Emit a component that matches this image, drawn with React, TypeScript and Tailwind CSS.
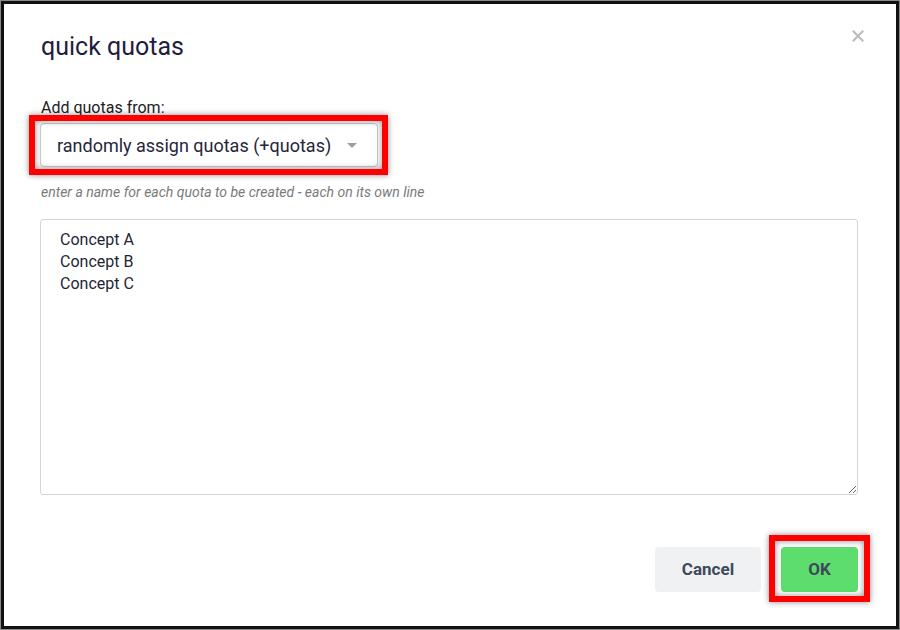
import React from 'react';

const font = { fontFamily: 'Roboto, "Liberation Sans", sans-serif' };

// red annotation frame drawn over a control
function Highlight({ className }: { className: string }) {
  return (
    <span
      className={`pointer-events-none absolute border-[6px] border-[#ff0000] shadow-[0_0_6px_rgba(0,0,0,0.45),inset_0_0_6px_rgba(0,0,0,0.45)] ${className}`}
    />
  );
}

export default function App() {
  return (
    <div className="w-[900px] h-[630px] bg-[#8a8a8a] p-px" style={font}>
      <div className="relative flex h-full flex-col border-[3px] border-[#111] bg-white pl-[36px] pr-[38px] pt-[28px] pb-[34px]">
        <button className="absolute right-[32px] top-[26px]">
          <svg width="12" height="12" viewBox="0 0 12 12" stroke="#bdbdbd" strokeWidth="2.2" strokeLinecap="square">
            <path d="M1.5 1.5 L10.5 10.5 M10.5 1.5 L1.5 10.5" />
          </svg>
        </button>

        <h2 className="pl-px text-[25px] leading-[30px] text-[#1f1d3d]">quick quotas</h2>

        <label className="mt-[36px] pl-px text-[16px] leading-[20px] text-[#222]">Add quotas from:</label>

        <div className="relative mt-[5px] flex self-start">
          <div className="flex h-[44px] w-[338px] items-center justify-between rounded-[4px] border border-[#cacaca] bg-white pl-[16px] pr-[20px] shadow-[0_1px_2px_rgba(0,0,0,0.08)]">
            <span className="text-[18px] text-[#26263a]">randomly assign quotas (+quotas)</span>
            <span className="h-0 w-0 border-x-[5px] border-t-[5px] border-x-transparent border-t-[#a0a0a0]" />
          </div>
          <Highlight className="-left-[11px] -right-[10px] -top-[8px] -bottom-[8px]" />
        </div>

        <p className="mt-[16px] pl-px text-[14px] italic leading-[18px] text-[#7a7a7a]">
          enter a name for each quota to be created - each on its own line
        </p>

        <textarea
          className="mt-[18px] h-[276px] w-full rounded-[3px] border border-[#cfd5db] px-[19px] py-[9px] text-[16px] leading-[22px] text-[#1e2535] outline-none"
          defaultValue={'Concept A\nConcept B\nConcept C'}
        />

        <div className="mt-auto flex justify-end gap-[20px]">
          <button className="h-[45px] w-[106px] rounded-[4px] bg-[#f0f1f3] text-[17px] font-bold text-[#3e4a5b]">
            Cancel
          </button>
          <div className="relative flex">
            <button className="h-[45px] w-[77px] rounded-[4px] bg-[#5cdd6e] text-[17px] font-bold text-[#3e4a5b]">
              OK
            </button>
            <Highlight className="-left-[12px] -right-[12px] -top-[12px] -bottom-[10px]" />
          </div>
        </div>
      </div>
    </div>
  );
}
